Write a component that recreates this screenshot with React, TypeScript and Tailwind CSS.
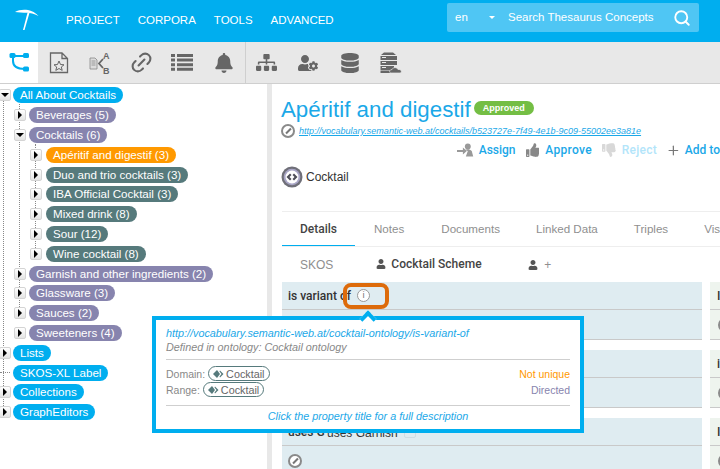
import { FaBell, FaDatabase, FaSitemap, FaThumbsDown, FaThumbsUp, FaUser, FaUserCog } from "react-icons/fa";
import { Link2, Plus, Search } from "lucide-react";

const NAV = ["PROJECT", "CORPORA", "TOOLS", "ADVANCED"];

type TreeRow = {
  label: string;
  level: 0 | 1 | 2;
  toggle: "open" | "closed" | "none";
  color: string;
};

const TREE: TreeRow[] = [
  { label: "All About Cocktails", level: 0, toggle: "open", color: "bg-[#00aeef]" },
  { label: "Beverages (5)", level: 1, toggle: "closed", color: "bg-[#8784ae]" },
  { label: "Cocktails (6)", level: 1, toggle: "open", color: "bg-[#8784ae]" },
  { label: "Apéritif and digestif (3)", level: 2, toggle: "closed", color: "bg-[#ff9900]" },
  { label: "Duo and trio cocktails (3)", level: 2, toggle: "closed", color: "bg-[#567a7c]" },
  { label: "IBA Official Cocktail (3)", level: 2, toggle: "closed", color: "bg-[#567a7c]" },
  { label: "Mixed drink (8)", level: 2, toggle: "closed", color: "bg-[#567a7c]" },
  { label: "Sour (12)", level: 2, toggle: "closed", color: "bg-[#567a7c]" },
  { label: "Wine cocktail (8)", level: 2, toggle: "closed", color: "bg-[#567a7c]" },
  { label: "Garnish and other ingredients (2)", level: 1, toggle: "closed", color: "bg-[#8784ae]" },
  { label: "Glassware (3)", level: 1, toggle: "closed", color: "bg-[#8784ae]" },
  { label: "Sauces (2)", level: 1, toggle: "closed", color: "bg-[#8784ae]" },
  { label: "Sweeteners (4)", level: 1, toggle: "closed", color: "bg-[#8784ae]" },
  { label: "Lists", level: 0, toggle: "closed", color: "bg-[#00aeef]" },
  { label: "SKOS-XL Label", level: 0, toggle: "none", color: "bg-[#00aeef]" },
  { label: "Collections", level: 0, toggle: "closed", color: "bg-[#00aeef]" },
  { label: "GraphEditors", level: 0, toggle: "closed", color: "bg-[#00aeef]" },
];

function Logo() {
  return (
    <svg width="26" height="26" viewBox="0 0 26 26" className="text-white">
      <path d="M1 3 C7 -0.500 18 -0.500 24.500 7 C20 4.500 16 3.700 13 3.700 C9 3.700 4 3.500 1 3 Z" fill="currentColor" />
      <path d="M13.500 3.700 L9 21 L10.500 21 L15.500 3.700 Z" fill="currentColor" />
    </svg>
  );
}

function GraphIcon() {
  return (
    <svg width="22" height="22" viewBox="0 0 22 22" className="text-[#00aeef]">
      <path d="M5 4 H17 M5 4 V9 C5 14 9 17 17 17" stroke="currentColor" strokeWidth="2" fill="none" />
      <rect x="1.500" y="1" width="6" height="5" rx="1.500" fill="currentColor" />
      <rect x="15" y="1" width="6" height="5" rx="1.500" fill="currentColor" />
      <rect x="15" y="14.500" width="6" height="5" rx="1.500" fill="currentColor" />
    </svg>
  );
}

function StarDocIcon() {
  return (
    <svg width="20" height="22" viewBox="0 0 20 22" className="text-[#666]">
      <path d="M1.500 1 H13 L18.500 6.500 V20.500 H1.500 Z M13 1 V6.500 H18.500" stroke="currentColor" strokeWidth="1.300" fill="none" />
      <path d="M10 9 L11.500 12.500 L15 12.800 L12.300 15 L13.200 18.400 L10 16.500 L6.800 18.400 L7.700 15 L5 12.800 L8.500 12.500 Z" stroke="currentColor" strokeWidth="1" fill="none" />
    </svg>
  );
}

function LabelsIcon() {
  return (
    <div className="relative h-[22px] w-[22px] text-[#666]">
      <svg width="22" height="22" viewBox="0 0 22 22" className="absolute left-0 top-0">
        <path d="M1 6 H6 L8 8 V17 H1 Z" fill="#dcdcdc" stroke="#888" strokeWidth="0.800" />
        <path d="M2.500 9 H6.500 M2.500 11 H6.500 M2.500 13 H6.500" stroke="#888" strokeWidth="0.800" />
        <path d="M14 7 L10 11.500 L14 16" stroke="currentColor" strokeWidth="1.800" fill="none" />
      </svg>
      <span className="absolute left-[14px] top-[-2px] text-[9px] font-bold leading-[12px]">A</span>
      <span className="absolute left-[14px] top-[13px] text-[9px] font-bold leading-[12px]">B</span>
    </div>
  );
}

function ListIcon() {
  return (
    <svg width="22" height="17" viewBox="0 0 22 17" className="text-[#666]">
      <path d="M0 0 H4 V3 H0 Z M6 0 H22 V3 H6 Z M0 4.600 H4 V7.600 H0 Z M6 4.600 H22 V7.600 H6 Z M0 9.200 H4 V12.200 H0 Z M6 9.200 H22 V12.200 H6 Z M0 13.800 H4 V16.800 H0 Z M6 13.800 H22 V16.800 H6 Z" fill="currentColor" />
    </svg>
  );
}

function ServerCloudIcon() {
  return (
    <svg width="22" height="22" viewBox="0 0 22 22" className="text-[#666]">
      <path d="M4 0.500 H13 L16 3 H1 Z" fill="currentColor" />
      <path d="M0.500 4 H17 V8 H0.500 Z M0.500 9 H17 V13 H0.500 Z M0.500 14 H14 V18 H0.500 Z M0.500 18.500 H12 V21 H0.500 Z" fill="currentColor" />
      <path d="M2 5.500 H6 M2 10.500 H6 M2 15.500 H6" stroke="#e8e8e8" strokeWidth="1" />
      <path d="M11 21 C9 21 9 17.500 12 17.500 C13 15 17 15 18 17.500 C22 17 22 21 20 21 Z" fill="currentColor" stroke="#e8e8e8" strokeWidth="0.700" />
    </svg>
  );
}

function AssignIcon() {
  return (
    <svg width="17" height="15" viewBox="0 0 17 15" className="text-[#999]">
      <path d="M0 7 H6 V4.500 L10 8 L6 11.500 V9 H0 Z" fill="currentColor" />
      <circle cx="11" cy="3.500" r="3" fill="currentColor" />
      <path d="M8 7 C10 6 13 6 15 8 L16.500 13.500 H9 L11 8 Z" fill="currentColor" />
    </svg>
  );
}

function ConceptIcon() {
  return (
    <svg width="22" height="22" viewBox="0 0 22 22">
      <circle cx="11" cy="11" r="10.500" fill="#6f6f78" />
      <circle cx="11" cy="11" r="8.300" fill="#a9a6c6" />
      <circle cx="11" cy="11" r="6.500" fill="#ffffff" />
      <path d="M9 7.500 L5.500 11 L9 14.500 L10.500 13 L8.500 11 L10.500 9 Z M13 7.500 L16.500 11 L13 14.500 L11.500 13 L13.500 11 L11.500 9 Z" fill="#4d4d57" />
    </svg>
  );
}

function ChipGlyph() {
  return (
    <svg width="11" height="8" viewBox="0 0 11 8" className="shrink-0 text-[#567a7c]">
      <path d="M4 0 L0 4 L4 8 L7 4 Z M7 0.500 L10.500 4 L7 7.500 L6.500 6.500 L8.500 4 L6.500 1.500 Z" fill="currentColor" />
    </svg>
  );
}

function Toggle({ open }: { open: boolean }) {
  return (
    <div className="relative z-10 flex h-[12px] w-[12px] items-center justify-center rounded-[2px] border border-[#d4d4d4] bg-gradient-to-b from-white to-[#e4e4e4]">
      {open ? (
        <div className="h-0 w-0 border-x-[4px] border-t-[4px] border-x-transparent border-t-black" />
      ) : (
        <div className="h-0 w-0 border-y-[4px] border-l-[4px] border-y-transparent border-l-black" />
      )}
    </div>
  );
}

function TreeNode({ row }: { row: TreeRow }) {
  const indent = row.level === 0 ? "pl-0 -ml-[1px]" : row.level === 1 ? "pl-[14px]" : "pl-[30px]";
  const gap = row.level === 2 ? "ml-[4px]" : row.level === 1 ? "ml-[3px]" : "ml-[2px]";
  return (
    <div className={`flex h-[19.800px] items-center ${indent}`}>
      <div className="flex w-[12px] shrink-0 items-center justify-center">
        {row.toggle === "none" ? (
          <div className="h-0 w-[10px] border-t border-dotted border-[#888]" />
        ) : (
          <Toggle open={row.toggle === "open"} />
        )}
      </div>
      <span className={`${gap} whitespace-nowrap rounded-full px-[7px] text-[11.600px] leading-[16px] text-white ${row.color}`}>
        {row.label}
      </span>
    </div>
  );
}

function ConceptChip() {
  return (
    <span className="inline-flex h-[15px] items-center gap-[2px] rounded-full border border-[#567a7c] px-[4px] text-[10.800px] leading-[12px] text-[#666]">
      <ChipGlyph />
      Cocktail
    </span>
  );
}

function EditCircle() {
  return (
    <div className="flex h-[14px] w-[14px] shrink-0 items-center justify-center rounded-full border-2 border-[#8a8a8a] bg-white">
      <div className="h-[2px] w-[7px] -rotate-45 bg-[#777]" />
    </div>
  );
}

function PropertyCard({ title, edit }: { title?: React.ReactNode; edit?: boolean }) {
  return (
    <div className="w-[420px] bg-[#dfecf1]">
      <div className="flex h-[28px] items-center border-b border-[#c9c9c9] pl-[6px] text-[12px] text-[#333]">
        {title}
      </div>
      <div className="flex h-[30px] items-center border-b border-[#c9c9c9] pl-[6px]">
        {edit ? <EditCircle /> : null}
      </div>
    </div>
  );
}

function SideCard({ letter }: { letter: string }) {
  return (
    <div className="w-[20px] overflow-hidden bg-[#eef4ee]">
      <div className="flex h-[28px] items-center border-b border-[#c9c9c9] pl-[7px] font-['Roboto',sans-serif] text-[12px] font-medium text-[#333]">
        {letter}
      </div>
      <div className="flex h-[30px] items-center border-b border-[#c9c9c9] pl-[8px]">
        <EditCircle />
      </div>
    </div>
  );
}

export default function App() {
  return (
    <div className="relative flex h-[469px] w-[720px] flex-col overflow-hidden bg-white font-['Liberation_Sans',Arial,sans-serif]">
      <header className="flex h-[42px] shrink-0 items-center bg-[#00aeef]">
        <div className="ml-[14px] mt-[2px]">
          <Logo />
        </div>
        <nav className="ml-[26px] flex gap-[18px] text-[11.500px] text-white">
          {NAV.map((item) => (
            <span key={item}>{item}</span>
          ))}
        </nav>
        <div className="ml-auto mr-[21px] mt-[-7px] flex h-[29px] w-[252px] items-center rounded-[2px] bg-[#4fc6f4] pl-[8px] text-[11.500px] text-white">
          <span className="w-[34px]">en</span>
          <div className="h-0 w-0 border-x-[3px] border-t-[3px] border-x-transparent border-t-white" />
          <span className="ml-[13px]">Search Thesaurus Concepts</span>
          <Search className="ml-[19px]" size={18} strokeWidth={2.500} />
        </div>
      </header>

      <div className="flex h-[42px] shrink-0 items-start border-b border-[#cfcfcf] bg-[#e8e8e8]">
        <div className="flex h-[41px] w-[38px] shrink-0 items-center justify-center bg-white"><GraphIcon /></div>
        <div className="flex h-[41px] w-[42px] items-center justify-center"><StarDocIcon /></div>
        <div className="flex h-[41px] w-[40px] items-center justify-center"><LabelsIcon /></div>
        <div className="flex h-[41px] w-[42px] items-center justify-center"><Link2 size={25} strokeWidth={2} className="-rotate-45 text-[#666]" /></div>
        <div className="flex h-[41px] w-[40px] items-center justify-center"><ListIcon /></div>
        <div className="flex h-[41px] w-[43px] items-center justify-center"><FaBell size={20} className="text-[#666]" /></div>
        <div className="h-[41px] w-px bg-[#cfcfcf]" />
        <div className="flex h-[41px] w-[40px] items-center justify-center"><FaSitemap size={21} className="text-[#666]" /></div>
        <div className="flex h-[41px] w-[44px] items-center justify-center"><FaUserCog size={20} className="text-[#666]" /></div>
        <div className="flex h-[41px] w-[40px] items-center justify-center"><FaDatabase size={20} className="text-[#666]" /></div>
        <div className="flex h-[41px] w-[42px] items-center justify-center"><ServerCloudIcon /></div>
      </div>

      <div className="flex min-h-0 flex-1">
        <aside className="relative w-[267px] shrink-0 pt-[1.500px]">
          <div className="absolute left-[3px] top-[10px] h-[322px] border-l border-dotted border-[#888]" />
          <div className="absolute left-[19px] top-[20px] h-[207px] border-l border-dotted border-[#888]" />
          <div className="absolute left-[35px] top-[60px] h-[110px] border-l border-dotted border-[#888]" />
          {TREE.map((row) => (
            <TreeNode key={row.label} row={row} />
          ))}
        </aside>
        <div className="w-[5px] shrink-0 bg-[#e8e8e8]" />

        <main className="min-w-0 flex-1 overflow-hidden pl-[9px]">
          <div className="mt-[13px] flex items-center">
            <h1 className="whitespace-nowrap text-[22.300px] leading-[26px] text-[#1ba8e8]">Apéritif and digestif</h1>
            <span className="ml-[3px] mt-[-4px] rounded-full bg-[#74be44] px-[9px] text-[9px] font-bold leading-[14px] text-white">
              Approved
            </span>
          </div>
          <div className="mt-[1px] flex items-center">
            <EditCircle />
            <span className="ml-[4px] text-[9px] italic leading-[12px] text-[#1ba8e8] underline">
              http://vocabulary.semantic-web.at/cocktails/b523727e-7f49-4e1b-9c09-55002ee3a81e
            </span>
          </div>
          <div className="ml-[176px] mt-[3px] flex h-[18px] items-center whitespace-nowrap font-['Roboto',sans-serif] text-[12px] font-medium text-[#1ba8e8]">
            <AssignIcon />
            <span className="ml-[5px]">Assign</span>
            <FaThumbsUp size={14} className="ml-[10px] text-[#888]" />
            <span className="ml-[6px] tracking-[0.300px]">Approve</span>
            <FaThumbsDown size={14} className="ml-[10px] text-[#d8d8d8]" />
            <span className="ml-[6px] tracking-[0.300px] text-[#b3e5fa]">Reject</span>
            <Plus size={15} className="ml-[9px] text-[#777]" />
            <span className="ml-[4px]">Add to</span>
          </div>
          <div className="mt-[7px] flex items-center">
            <ConceptIcon />
            <span className="ml-[3px] text-[12px] text-[#333]">Cocktail</span>
          </div>

          <div className="ml-[1px] mt-[23px] w-[438px] border-t border-[#eeeeee]">
            <div className="flex h-[34px] items-center whitespace-nowrap text-[11.600px] text-[#8f8f8f]">
              <span className="flex h-[34px] w-[73px] shrink-0 items-center justify-center border-b border-[#00aeef] font-['Roboto',sans-serif] text-[12px] font-medium text-[#444]">Details</span>
              <span className="pl-[19px]">Notes</span>
              <span className="pl-[37px]">Documents</span>
              <span className="pl-[36px]">Linked Data</span>
              <span className="pl-[36px]">Triples</span>
              <span className="pl-[36px]">Visualization</span>
            </div>
            <div className="flex h-[36px] items-center border-t border-[#eeeeee] text-[12px] text-[#8f8f8f]">
              <span className="pl-[18px]">SKOS</span>
              <span className="ml-[18px] flex h-[36px] w-[152px] items-center border-b border-[#00aeef] pl-[25px] font-['Roboto',sans-serif] font-medium text-[#444]">
                <FaUser size={10} className="mr-[5px] text-[#555]" />
                Cocktail Scheme
              </span>
              <span className="ml-[25px] flex items-center">
                <FaUser size={10} className="mr-[6px] text-[#555]" />+
              </span>
            </div>
            <div className="flex gap-[8px]">
              <div className="flex flex-col gap-[10px]">
                <PropertyCard
                  title={
                    <span className="flex items-center font-['Roboto',sans-serif] font-medium">
                      is variant of
                      <span className="ml-[6px] flex h-[13px] w-[13px] items-center justify-center rounded-full border border-[#999] bg-white text-[9px] font-normal leading-none text-[#777]">i</span>
                    </span>
                  }
                />
                <PropertyCard />
                <PropertyCard
                  edit
                  title={
                    <span className="flex items-center whitespace-nowrap">
                      <span className="w-[39px] overflow-hidden font-['Roboto',sans-serif] font-medium">uses G</span>
                      <span className="mt-[3px]">uses Garnish</span>
                      <span className="ml-[6px] h-[12px] w-[12px] rounded-[2px] border border-[#cfdde3]" />
                    </span>
                  }
                />
              </div>
              <div className="flex flex-col gap-[10px]">
                <SideCard letter="I" />
                <SideCard letter="i" />
                <SideCard letter="I" />
              </div>
            </div>
          </div>
        </main>
      </div>

      {/* orange highlight over the info icon */}
      <div className="absolute left-[343px] top-[283px] h-[26px] w-[46px] rounded-[8px] border-[4px] border-[#dd6b0b]" />

      {/* property tooltip */}
      <div className="absolute left-[152px] top-[316px] h-[117px] w-[432px] border-[4px] border-[#00aeef] bg-white px-[10px] pt-[6px] text-[#888]">
        <div className="absolute left-[206px] top-[-7px] h-[12px] w-[12px] rotate-45 border-l-[4px] border-t-[4px] border-[#00aeef] bg-white" />
        <div className="text-[10.800px] italic leading-[14px] text-[#1ba8e8]">http://vocabulary.semantic-web.at/cocktail-ontology/is-variant-of</div>
        <div className="text-[10.800px] italic leading-[14px]">Defined in ontology: Cocktail ontology</div>
        <div className="mt-[5px] flex h-[47px] flex-col justify-center border-y border-[#cfcfcf] text-[10.500px]">
          <div className="flex h-[16px] items-center">
            Domain:
            <span className="ml-[3px]"><ConceptChip /></span>
            <span className="ml-auto text-[#ff9900]">Not unique</span>
          </div>
          <div className="flex h-[16px] items-center">
            Range:
            <span className="ml-[3px]"><ConceptChip /></span>
            <span className="ml-auto text-[#8784ae]">Directed</span>
          </div>
        </div>
        <div className="mt-[3px] text-center text-[10.800px] italic leading-[14px] text-[#1ba8e8]">Click the property title for a full description</div>
      </div>
    </div>
  );
}
